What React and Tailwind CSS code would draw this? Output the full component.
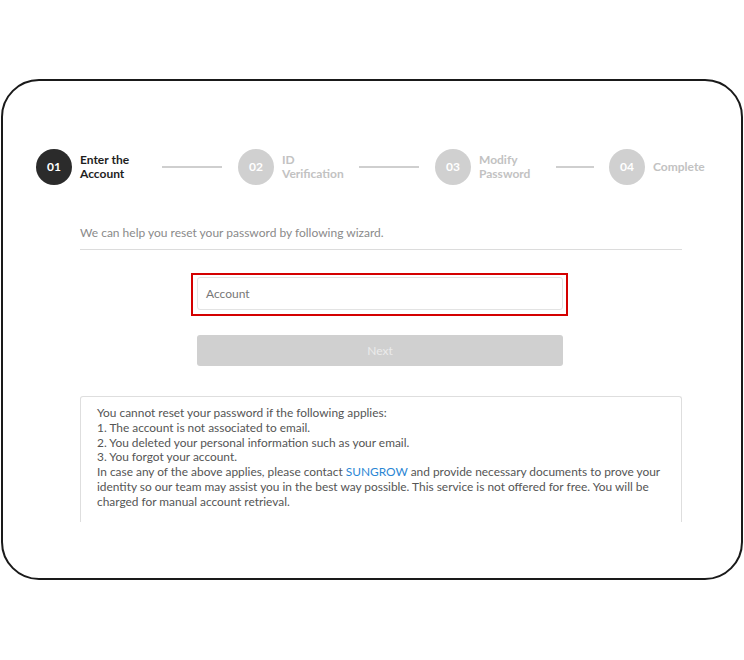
import React from 'react';

const steps = [
  { num: '01', label: ['Enter the', 'Account'], active: true, labelW: 'w-[66px]', line: 'w-[60px] ml-4 mr-4' },
  { num: '02', label: ['ID', 'Verification'], active: false, labelW: 'w-[61px]', line: 'w-[60px] ml-4 mr-4' },
  { num: '03', label: ['Modify', 'Password'], active: false, labelW: 'w-[61px]', line: 'w-[38px] ml-4 mr-[15px]' },
  { num: '04', label: ['Complete'], active: false, labelW: '', line: null },
];

const App = () => {
  return (
    <div className="w-[744px] h-[660px] bg-white pt-[79px] pl-[1px]" style={{ fontFamily: 'Lato, "Open Sans", sans-serif' }}>
      <div className="w-[742px] h-[501px] border-[2.5px] border-[#1a1a1a] rounded-[38px] bg-white overflow-hidden">
        {/* Steps */}
        <div className="flex items-center pl-[33px] pt-[68px]">
          {steps.map(s => (
            <React.Fragment key={s.num}>
              <div
                className={`w-9 h-9 rounded-full flex items-center justify-center text-[12px] font-bold text-white flex-shrink-0 ${s.active ? 'bg-[#2b2b2b]' : 'bg-[#d0d0d0]'}`}
              >
                {s.num}
              </div>
              <div className={`ml-2 ${s.labelW} text-[12px] font-bold leading-[14px] ${s.active ? 'text-[#1e1e1e]' : 'text-[#c2c2c2]'}`}>
                {s.label.map(l => <div key={l}>{l}</div>)}
              </div>
              {s.line && <div className={`${s.line} h-[1.5px] bg-[#cfcfcf]`}></div>}
            </React.Fragment>
          ))}
        </div>

        {/* Content */}
        <div className="ml-[77px] w-[602px]">
          <p className="mt-[40px] pb-2 border-b border-[#dcdcdc] text-[12px] leading-4 text-[#8a8a8a]">
            We can help you reset your password by following wizard.
          </p>

          <div className="mt-[23px] ml-[111px] w-[377px] h-[43px] border-2 border-[#d40000] pt-[2px] pl-1">
            <div className="w-[366px] h-[33px] border border-[#e3e3e3] rounded-[3px] flex items-center pl-2 text-[12px] text-[#777]">
              Account
            </div>
          </div>

          <div className="mt-[19px] ml-[117px] w-[366px] h-[31px] bg-[#d0d0d0] rounded-[3px] flex items-center justify-center text-[12px] text-[#ebebeb]">
            Next
          </div>

          <div className="mt-[30px] h-[126px] border border-b-0 border-[#dedede] rounded-t-[3px] pl-4 pt-[9px] text-[11.9px] leading-[14.8px] text-[#555] overflow-hidden">
            <div>You cannot reset your password if the following applies:</div>
            <div>1. The account is not associated to email.</div>
            <div>2. You deleted your personal information such as your email.</div>
            <div>3. You forgot your account.</div>
            <div>
              In case any of the above applies, please contact <span className="text-[#2a86d4]">SUNGROW</span> and provide necessary documents to prove your
              <br />
              identity so our team may assist you in the best way possible. This service is not offered for free. You will be
              <br />
              charged for manual account retrieval.
            </div>
          </div>
        </div>
      </div>
    </div>
  );
};

export default App;
